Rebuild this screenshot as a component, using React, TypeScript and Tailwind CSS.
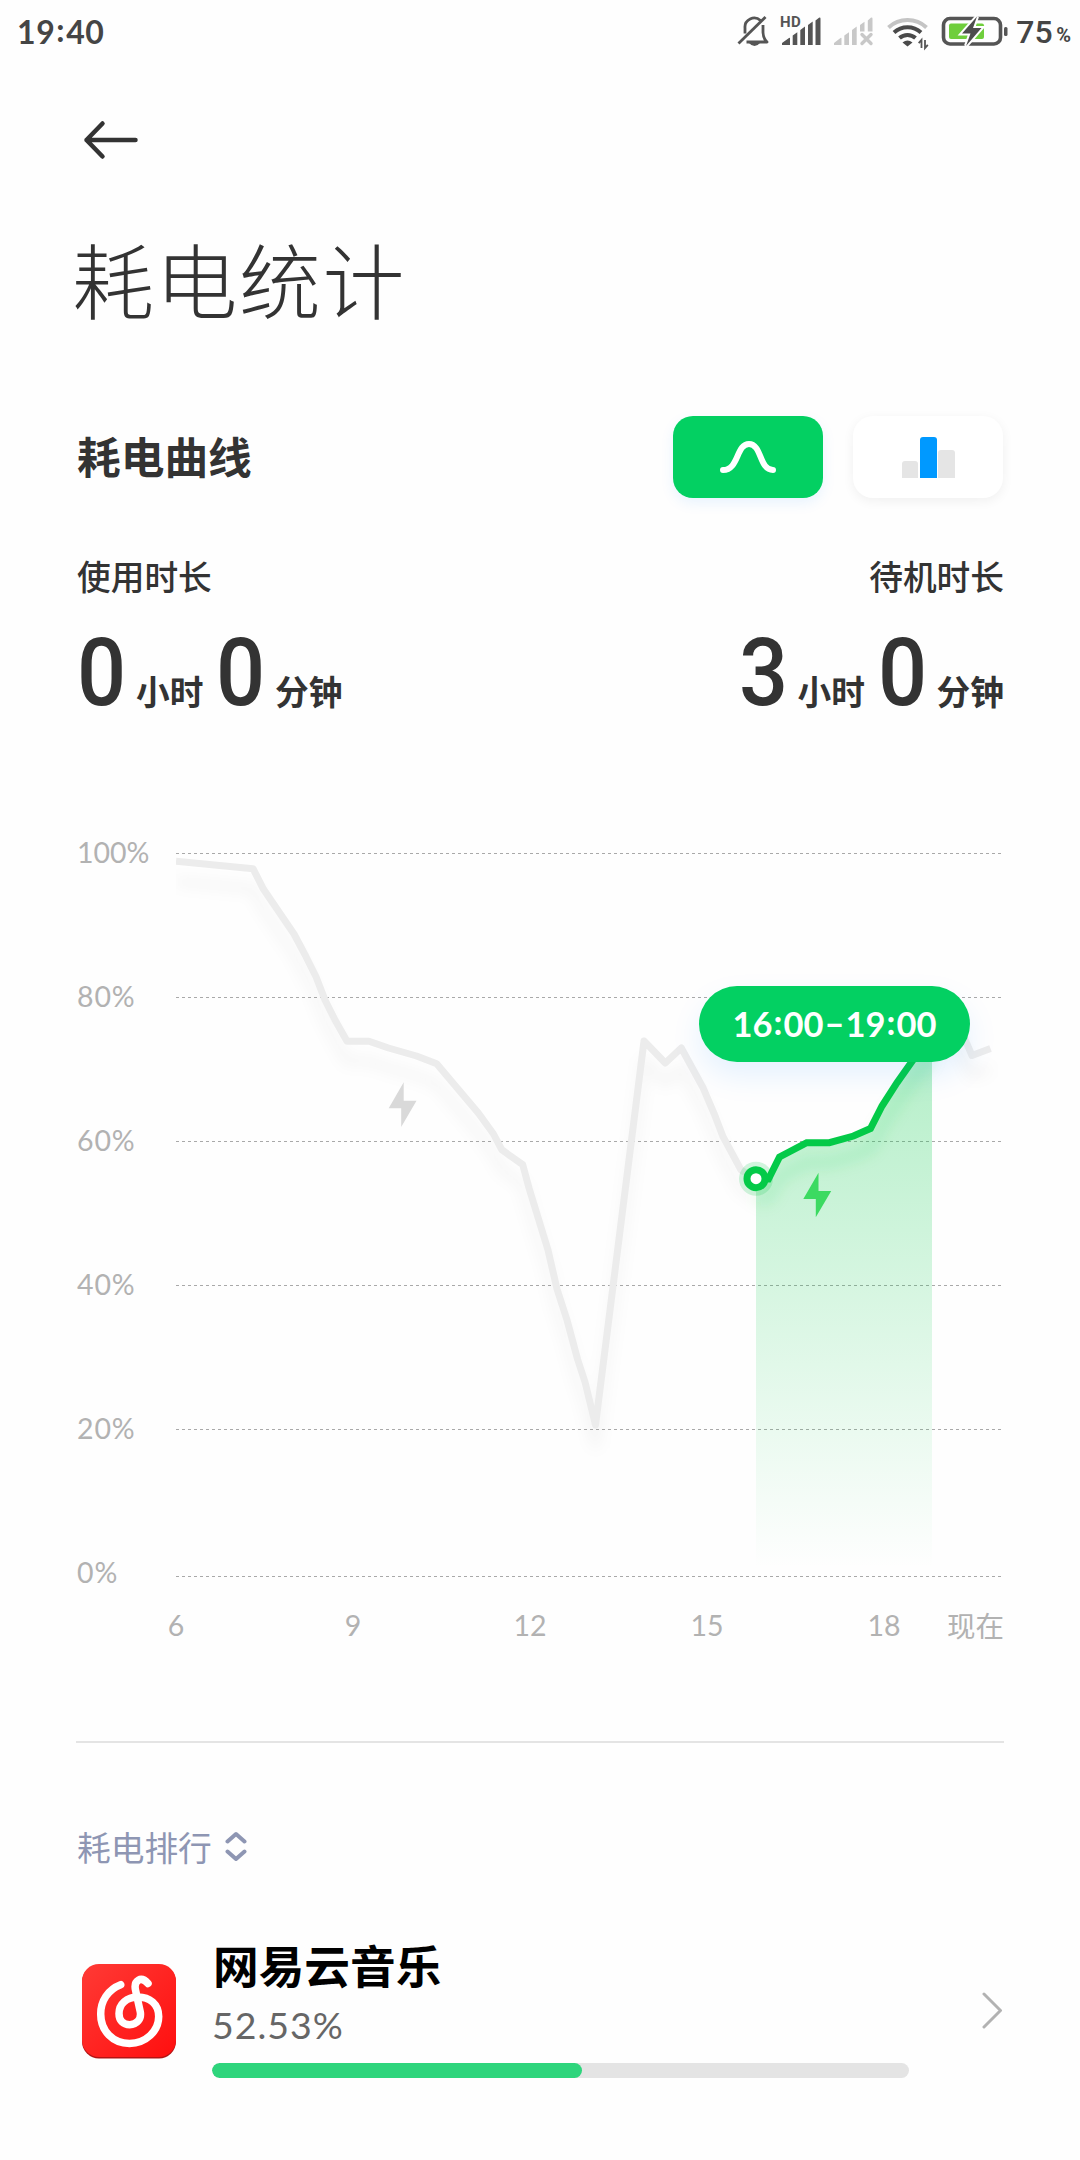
import type { ReactNode } from "react"

const LINE_POINTS =
  "176,861.3 253,868.7 263.5,889.3 294,934 306,956.7 316,976.7 325,1000 335,1020 347,1041.3 369,1041.3 388.5,1048 416.5,1056 436.7,1063.7 478.5,1113.3 493.5,1134 501.7,1149.7 522.7,1164.7 529,1188 548,1250 557,1289 567,1320 577.5,1359 585,1382 595.5,1425 644,1041 665.3,1063 681.3,1048 703.3,1088.3 714,1113.3 723,1136.7 741,1170 756,1179"
const TAIL_POINTS = "955,1018 966,1041.7 972,1055.5 990.5,1048.5"
const GREEN_POINTS =
  "756,1179 768.5,1179 779.5,1157 806.7,1142.7 829.3,1142.7 853.5,1136 870.5,1128.5 882,1106 897,1082.7 913,1060 932,1036"

const GRID_LINES = [853.5, 997.5, 1141.5, 1285.5, 1429.5, 1576.5]
const Y_LABELS = ["100%", "80%", "60%", "40%", "20%", "0%"]
const X_LABELS = ["6", "9", "12", "15", "18"]

// sits a little higher than the font's own colon
const Colon = () => <span className="mx-px inline-block -translate-y-[2px]">:</span>

const StatusBar = () => {
  return (
    <div className="flex h-[64px] items-center justify-between pl-[17px] pr-[9px] text-[#454545]">
      <span className="font-[Lato] text-[32px] font-bold leading-[64px] tracking-[0.6px]">19<Colon />40</span>
      <div className="flex items-center">
        <StatusIcons />
        <span className="w-[40px] font-[Roboto] text-[32px] font-medium leading-[64px]">75</span>
        <span className="pt-[7px] font-[Roboto] text-[20px] font-bold leading-[57px]">%</span>
      </div>
    </div>
  )
}

const StatusIcons = () => {
  return (
    <svg className="block h-[64px] w-[280px]" viewBox="736 0 280 64" fill="none">
      {/* muted bell */}
      <g stroke="#555" strokeWidth="2.8" strokeLinejoin="round">
        <path d="M760.500 20.500a9.200 9.200 0 0 0-15.500 7.500v5.500M763 25v7.500q.3 6 4 9.500H746.500" />
        <path d="M738.500 43.500L765.500 17" />
      </g>
      <path d="M749 43h11q-2.500 3-5.500 3t-5.500-3z" fill="#555" />
      <text x="780" y="27.300" className="font-[Roboto] text-[15px] font-bold" fill="#555" letterSpacing="0.4">HD</text>
      {/* first sim */}
      <g fill="#555">
        <path d="M782 45v-2l7-5q1-.6 1 .6V45zM792.700 45V35.500l4.600-3.200V45zM800.300 45V30l4.700-3.500V45zM808 45V25l4.700-3.500V45zM815.500 45V20.500l3.500-2.700q1.500-.8 1.500 1V45z" />
      </g>
      {/* second sim, no service */}
      <g fill="#c8c8c8">
        <path d="M834 45v-2l6.500-5q1-.6 1 .6V45zM844.300 45V35.500l4.700-3.200V45zM852 45V30l4.700-3.500V45zM860 31.500V25l4.500-3.200v9.700zM867.800 31.500V20.500l3-2.700q1.700-.8 1.700 1v12.700z" />
      </g>
      <path d="M862 34.500l9 9M871 34.500l-9 9" stroke="#c8c8c8" strokeWidth="3.400" strokeLinecap="round" />
      {/* wifi */}
      <path d="M888.500 27.500a28 28 0 0 1 38 0" stroke="#c4c4c4" strokeWidth="4" />
      <path d="M894 32.500a20 20 0 0 1 27 0M899.500 38a12 12 0 0 1 16 0" stroke="#4a4a4a" strokeWidth="4" />
      <path d="M902.500 42.500q5-4 10 0L907.500 46.500z" fill="#4a4a4a" />
      <path d="M921.500 48V40l-2.800 3.200M925 40v8l2.800-3.200" stroke="#555" strokeWidth="1.800" />
      {/* battery */}
      <rect x="943.500" y="18.500" width="57" height="25.500" rx="6.500" stroke="#555" strokeWidth="3.600" />
      <rect x="949" y="23.500" width="35" height="15.500" rx="2" fill="#6fce3c" />
      <rect x="1004" y="27" width="3.500" height="9" rx="1.500" fill="#555" />
      <path d="M977 16.500L962 33.500h8.500L966 46 981.500 28h-8.500z" fill="#4d4d4d" stroke="#fff" strokeWidth="4" paintOrder="stroke" />
    </svg>
  )
}

interface ToggleButtonProps {
  active?: boolean
  children: ReactNode
}

const ToggleButton = ({ active, children }: ToggleButtonProps) => {
  return (
    <button
      className={`flex h-[82px] w-[150px] items-center justify-center rounded-[20px] ${
        active ? "bg-[#03d062] shadow-[0_5px_14px_rgba(13,132,255,0.09)]" : "bg-white shadow-[0_3px_12px_rgba(0,0,0,0.06)]"
      }`}
    >
      {children}
    </button>
  )
}

const BigNumber = ({ value }: { value: number }) => {
  return (
    <span className="w-[59px] origin-left scale-x-[0.92] font-[Roboto] text-[94px] font-medium">{value}</span>
  )
}

interface DurationProps {
  label: string
  hours: number
  minutes: number
  alignRight?: boolean
}

const Duration = ({ label, hours, minutes, alignRight }: DurationProps) => {
  return (
    <div className={`flex flex-col ${alignRight ? "items-end" : "items-start"}`}>
      <div className="text-[33.7px] font-medium leading-[50px]">{label}</div>
      <div className="mt-[17px] flex h-[110px] items-baseline text-[33.7px] font-bold leading-[110px]">
        <BigNumber value={hours} />
        <span className="w-[80px]">小时</span>
        <BigNumber value={minutes} />
        <span>分钟</span>
      </div>
    </div>
  )
}

const Chart = () => {
  return (
    <div className="relative mt-[94px]">
      <div className="flex h-[768px]">
        <div className="flex w-[100px] flex-col pl-px font-[Lato] text-[28.5px] text-[#b2b2b2]">
          {Y_LABELS.map((label) => (
            <div key={label} className="h-[144px] shrink-0 leading-[60px] not-first:tracking-[0.9px]">{label}</div>
          ))}
        </div>
        <svg className="block h-[768px] w-[828px] shrink-0" viewBox="176 822 828 768" fill="none">
          <defs>
            <linearGradient id="area" gradientUnits="userSpaceOnUse" x1="0" y1="1040" x2="0" y2="1568">
              <stop offset="0" stopColor="#04ca48" stopOpacity="0.3" />
              <stop offset="1" stopColor="#04ca48" stopOpacity="0" />
            </linearGradient>
            <filter id="soft" x="-10%" y="-20%" width="120%" height="140%">
              <feGaussianBlur stdDeviation="7" />
            </filter>
          </defs>
          {GRID_LINES.map((y) => (
            <path key={y} d={`M176 ${y}H1001`} stroke="#a9a9a9" strokeWidth="1" strokeDasharray="3 3" />
          ))}
          <g strokeWidth="9" strokeLinejoin="round" filter="url(#soft)" transform="translate(0 20)">
            <polyline points={LINE_POINTS} stroke="#000" strokeOpacity="0.035" />
            <polyline points={TAIL_POINTS} stroke="#000" strokeOpacity="0.035" />
            <polyline points={GREEN_POINTS} stroke="#04ca48" strokeOpacity="0.14" />
          </g>
          <path d={`M756 1576V1179L${GREEN_POINTS.replace(/ /g, "L")}V1576z`} fill="url(#area)" />
          <g stroke="#ececec" strokeWidth="7" strokeLinejoin="round">
            <polyline points={LINE_POINTS} />
            <polyline points={TAIL_POINTS} />
          </g>
          <polyline points={GREEN_POINTS} stroke="#04ca48" strokeWidth="7" />
          <circle cx="756" cy="1178.700" r="17" fill="#04ca48" fillOpacity="0.18" />
          <circle cx="756" cy="1178.700" r="9" fill="#fff" stroke="#04ca48" strokeWidth="7" />
          <path d="M403.700 1082.300V1100.700H416.500L401.200 1127V1108.300H388.700z" fill="#d9d9d9" />
          <path d="M818.500 1172.700V1191H831.200L815.800 1217.300V1199H803.300z" fill="#3cda61" />
        </svg>
      </div>
      {/* selected range */}
      <div className="absolute left-[623px] top-[164px] flex h-[76px] w-[271px] items-center justify-center rounded-full bg-[#03d062] font-[Lato] text-[34.5px] font-bold text-white shadow-[0_14px_30px_rgba(13,132,255,0.1)]">
        16<Colon />00<span className="mx-px inline-block -translate-y-px font-black">–</span>19<Colon />00
      </div>
      <div className="flex items-center pl-[41px] text-[28.5px] leading-[70px] text-[#b2b2b2]">
        <div className="flex gap-[59px] font-[Lato]">
          {X_LABELS.map((label) => (
            <span key={label} className="w-[118px] text-center">{label}</span>
          ))}
        </div>
        <span className="ml-auto whitespace-nowrap">现在</span>
      </div>
    </div>
  )
}

const AppIcon = () => {
  return (
    <svg className="block h-[96px] w-[96px]" viewBox="0 0 96 96" fill="none">
      <defs>
        <linearGradient id="red" x1="0" y1="0" x2="1" y2="1">
          <stop offset="0" stopColor="#ff3a35" />
          <stop offset="1" stopColor="#ff0f0f" />
        </linearGradient>
      </defs>
      <rect x="1" y="2" width="94" height="93.500" rx="17" fill="#b31414" />
      <rect x="1" y="1" width="94" height="93" rx="17" fill="url(#red)" />
      <path
        d="M39.700 21.700C27 26.500 19.700 38 19.700 51C19.700 68 32 80.400 48.500 80.400S77.700 68 77.700 53.500C77.700 41 68.500 34 57 34C45.500 34 38 41 38 50.500C38 57.500 42 61.700 48.700 61.700C56 61.700 60.500 56 59.300 49L54.500 27C52.500 17.500 60 12.500 67 20.500"
        stroke="#fff"
        strokeWidth="7.500"
        strokeLinecap="round"
      />
    </svg>
  )
}

interface AppRowProps {
  name: string
  percent: number
}

const AppRow = ({ name, percent }: AppRowProps) => {
  return (
    <div className="mt-[62px] flex items-center">
      <div className="ml-[4.5px] mt-[10px]">
        <AppIcon />
      </div>
      <div className="ml-[35.5px] w-[697px]">
        <div className="pl-px text-[45.7px] font-bold leading-[60px] text-black">{name}</div>
        <div className="mt-[2px] font-[Lato] text-[37.5px] leading-[58px] tracking-[1px] text-[#666]">{percent}%</div>
        <div className="mt-[9px] h-[15px] overflow-hidden rounded-full bg-[#e4e4e4]">
          <div className="h-full rounded-full bg-[#2ed57c]" style={{ width: `${percent + 0.5}%` }} />
        </div>
      </div>
      <svg className="ml-auto mt-[7px] block h-[38px] w-[22px]" viewBox="0 0 22 38" fill="none">
        <path d="M2 3L18.500 19.500L2 36" stroke="#b2b2b2" strokeWidth="3" strokeLinecap="round" strokeLinejoin="round" />
      </svg>
    </div>
  )
}

const App = () => {
  return (
    <div className="h-[2160px] w-[1080px] overflow-hidden bg-[#fefefe] font-['Noto_Sans_CJK_SC',sans-serif] text-[#333]">
      <StatusBar />
      <div className="px-[76px]">
        <svg className="ml-[6px] mt-[56px] block h-[40px] w-[58px]" viewBox="82 120 58 40" fill="none">
          <path d="M135.500 140H86.500M102.500 123.500L86.500 140L102.500 156.500" stroke="#333" strokeWidth="4.500" strokeLinecap="round" strokeLinejoin="round" />
        </svg>
        <h1 className="-ml-[4px] mt-[58px] text-[82px] font-light leading-[120px] tracking-[1.5px]">耗电统计</h1>

        <div className="mt-[78px] flex items-center justify-between pr-px">
          <h2 className="pb-[4px] pl-px text-[43.7px] font-bold leading-[78px]">耗电曲线</h2>
          <div className="flex gap-[30px]">
            <ToggleButton active>
              <svg className="h-[36px] w-[60px]" viewBox="0 0 60 36" fill="none">
                <path d="M5 31C21 31 18 5 31 5S41 31 55 31" stroke="#fff" strokeWidth="6" strokeLinecap="round" />
              </svg>
            </ToggleButton>
            <ToggleButton>
              <div className="flex h-[41px] items-end gap-[1.5px]">
                <div className="h-[17px] w-[16.5px] rounded-t-[3px] bg-[#e5e5e5]" />
                <div className="h-[41px] w-[17px] rounded-t-[3px] bg-[#0099ff]" />
                <div className="h-[28px] w-[16.5px] rounded-t-[3px] bg-[#e5e5e5]" />
              </div>
            </ToggleButton>
          </div>
        </div>

        <div className="mt-[53px] flex justify-between pl-px">
          <Duration label="使用时长" hours={0} minutes={0} />
          <Duration label="待机时长" hours={3} minutes={0} alignRight />
        </div>

        <Chart />

        <div className="mt-[81px] h-[2px] bg-[#e4e4e4]" />

        <div className="mt-[79px] flex items-center pl-px text-[33.7px] leading-[50px] text-[#8e96b3]">
          <span>耗电排行</span>
          <svg className="ml-[13px] block h-[32px] w-[22px]" viewBox="0 0 22 32" fill="none">
            <path d="M2.500 10.500L11 3L19.500 10.500M2.500 20.500L11 28L19.500 20.500" stroke="#8e96b3" strokeWidth="4" strokeLinecap="round" strokeLinejoin="round" />
          </svg>
        </div>

        <AppRow name="网易云音乐" percent={52.53} />
      </div>
    </div>
  )
}

export default App
